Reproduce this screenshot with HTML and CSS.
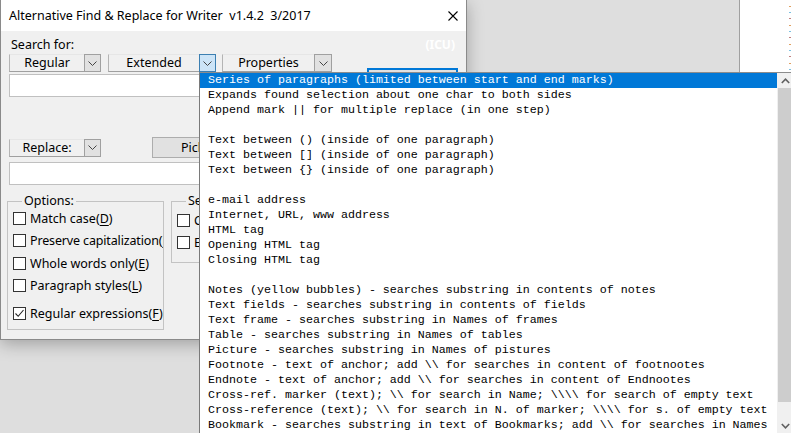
FILE: index.html
```html
<!DOCTYPE html>
<html>
<head>
<meta charset="utf-8">
<link rel="stylesheet" href="styles.css">
</head>
<body>
<div class="side-window"><div class="specks"></div></div>

<div class="dialog">
  <div class="titlebar">
    <span class="title">Alternative Find &amp; Replace for Writer  v1.4.2  3/2017</span>
    <svg class="close" width="10" height="10" viewBox="0 0 10 10"><path d="M0.5 0.5 L9.5 9.5 M9.5 0.5 L0.5 9.5" stroke="#000" stroke-width="1.1" fill="none"/></svg>
  </div>
  <div class="dlg-body">
    <div class="search-head">
      <span class="lbl">Search for:</span>
      <span class="icu">(ICU)</span>
    </div>
    <div class="combo-row">
      <div class="combo w-reg"><span class="ctext">Regular</span><span class="carrow"><svg width="9" height="5" viewBox="0 0 9 5"><path d="M0.5 0.5 L4.5 4.5 L8.5 0.5" stroke="#444" fill="none"/></svg></span></div>
      <div class="combo w-ext"><span class="ctext">Extended</span><span class="carrow open"><svg width="9" height="5" viewBox="0 0 9 5"><path d="M0.5 0.5 L4.5 4.5 L8.5 0.5" stroke="#444" fill="none"/></svg></span></div>
      <div class="combo w-prop"><span class="ctext">Properties</span><span class="carrow"><svg width="9" height="5" viewBox="0 0 9 5"><path d="M0.5 0.5 L4.5 4.5 L8.5 0.5" stroke="#444" fill="none"/></svg></span></div>
    </div>
    <div class="edit-row">
      <div class="edit"></div>
      <div class="btn focus"></div>
    </div>
    <div class="replace-row">
      <div class="combo w-reg"><span class="ctext">Replace:</span><span class="carrow"><svg width="9" height="5" viewBox="0 0 9 5"><path d="M0.5 0.5 L4.5 4.5 L8.5 0.5" stroke="#444" fill="none"/></svg></span></div>
      <div class="btn pick"><span class="pick-label">Pick</span></div>
    </div>
    <div class="edit wide"></div>
    <div class="groups">
      <fieldset class="group g-opts">
        <legend>Options:</legend>
        <div class="cb-list">
          <div class="cb-row"><span class="cb"></span><span>Match case(<u>D</u>)</span></div>
          <div class="cb-row"><span class="cb"></span><span class="tight">Preserve capitalization(<u>P</u>)</span></div>
          <div class="cb-row"><span class="cb"></span><span>Whole words only(<u>E</u>)</span></div>
          <div class="cb-row"><span class="cb"></span><span>Paragraph styles(<u>L</u>)</span></div>
          <div class="cb-row last"><span class="cb checked"><svg width="11" height="11" viewBox="0 0 11 11"><path d="M1.5 5.5 L4.2 8.3 L9.5 2" stroke="#222" stroke-width="1.1" fill="none"/></svg></span><span>Regular expressions(<u>F</u>)</span></div>
        </div>
      </fieldset>
      <fieldset class="group g-sea">
        <legend><span class="clip">Search in:</span></legend>
        <div class="cb-list">
          <div class="cb-row"><span class="cb"></span><span>Current</span></div>
          <div class="cb-row"><span class="cb"></span><span>Entire</span></div>
        </div>
      </fieldset>
    </div>
  </div>
</div>

<div class="popup">
  <div class="list">
    <div class="item sel">Series of paragraphs (limited between start and end marks)</div>
    <div class="item">Expands found selection about one char to both sides</div>
    <div class="item">Append mark || for multiple replace (in one step)</div>
    <div class="item"> </div>
    <div class="item">Text between () (inside of one paragraph)</div>
    <div class="item">Text between [] (inside of one paragraph)</div>
    <div class="item">Text between {} (inside of one paragraph)</div>
    <div class="item"> </div>
    <div class="item">e-mail address</div>
    <div class="item">Internet, URL, www address</div>
    <div class="item">HTML tag</div>
    <div class="item">Opening HTML tag</div>
    <div class="item">Closing HTML tag</div>
    <div class="item"> </div>
    <div class="item">Notes (yellow bubbles) - searches substring in contents of notes</div>
    <div class="item">Text fields - searches substring in contents of fields</div>
    <div class="item">Text frame - searches substring in Names of frames</div>
    <div class="item">Table - searches substring in Names of tables</div>
    <div class="item">Picture - searches substring in Names of pistures</div>
    <div class="item">Footnote - text of anchor; add \\ for searches in content of footnootes</div>
    <div class="item">Endnote - text of anchor; add \\ for searches in content of Endnootes</div>
    <div class="item">Cross-ref. marker (text); \\ for search in Name; \\\\ for search of empty text</div>
    <div class="item">Cross-reference (text); \\ for search in N. of marker; \\\\ for s. of empty text</div>
    <div class="item">Bookmark - searches substring in text of Bookmarks; add \\ for searches in Names</div>
  </div>
  <div class="scrollbar">
    <div class="sb-btn"><svg width="9" height="6" viewBox="0 0 9 6"><path d="M0.8 5 L4.5 1.2 L8.2 5" stroke="#606060" stroke-width="1.6" fill="none"/></svg></div>
    <div class="sb-thumb"></div>
    <div class="sb-track"></div>
    <div class="sb-btn"><svg width="9" height="6" viewBox="0 0 9 6"><path d="M0.8 1 L4.5 4.8 L8.2 1" stroke="#606060" stroke-width="1.6" fill="none"/></svg></div>
  </div>
</div>
</body>
</html>
```

FILE: styles.css
```css
* { box-sizing: border-box; }
html, body { margin: 0; padding: 0; }
body {
  width: 791px;
  height: 433px;
  overflow: hidden;
  position: relative;
  background: #dedede;
  font-family: "Noto Sans", "Open Sans", sans-serif;
  font-size: 12.5px;
  color: #000;
}

/* window peeking at the right */
.side-window {
  position: absolute;
  left: 739px;
  top: 0;
  width: 52px;
  height: 100px;
  background: #fff;
  border-left: 1px solid #a0a0a0;
}
.specks {
  position: absolute;
  right: 0;
  top: 0;
  width: 2px;
  height: 100%;
  background: repeating-linear-gradient(180deg, #fff 0 6px, #e0a060 6px 7px, #fff 7px 12px, #7cc0e0 12px 13px, #fff 13px 18px, #c08080 18px 19px);
}

/* dialog */
.dialog {
  position: absolute;
  left: 0;
  top: 0;
  width: 467px;
  height: 340px;
  background: #f0f0f0;
  border: 1px solid #8a8a8a;
  border-top: none;
  box-shadow: 0 4px 16px rgba(0, 0, 0, 0.28);
  display: flex;
  flex-direction: column;
}
.titlebar {
  flex: none;
  height: 31px;
  background: #fff;
  display: flex;
  align-items: center;
  justify-content: space-between;
  padding: 0 8px 0 8px;
}
.title {
  white-space: pre;
}
.close { display: block; margin-top: 1px; }

.dlg-body {
  padding: 0 8px;
  display: flex;
  flex-direction: column;
}
.search-head {
  height: 23px;
  padding-top: 6px;
  line-height: 16px;
  display: flex;
}
.lbl { padding-left: 2px; }
.icu {
  margin-left: auto;
  margin-right: 3px;
  color: #fff;
  font-weight: bold;
  font-size: 12px;
}

.combo-row {
  height: 18px;
  display: flex;
  gap: 7px;
}
.combo {
  display: flex;
  height: 18px;
}
.ctext {
  display: flex;
  align-items: center;
  justify-content: center;
  background: #f0f0f0;
  border: 1px solid #e6e6e6;
  border-left-color: #b4b4b4;
  border-bottom-color: #a0a0a0;
  border-right: none;
  line-height: 16px;
}
.carrow {
  width: 17px;
  display: flex;
  align-items: center;
  justify-content: center;
  background: #e1e1e1;
  border: 1px solid #a0a0a0;
}
.carrow.open {
  background: #cce4f7;
  border-color: #3c7fb1;
}
.w-reg .ctext { width: 75px; }
.w-ext .ctext { width: 91px; }
.w-prop .ctext { width: 92px; }
.w-prop .carrow { width: 18px; }
.w-ext { margin-right: -1px; }

.edit-row {
  display: flex;
  align-items: flex-start;
  margin-top: -4px;
}
.edit {
  height: 23px;
  background: #fff;
  border: 1px solid #c0c0c0;
}
.edit-row .edit {
  flex: 1;
  margin-top: 6px;
}
.edit.wide { margin-top: 4px; }

.btn {
  display: flex;
  align-items: center;
  background: #e1e1e1;
  border: 1px solid #adadad;
}
.btn.focus {
  width: 91px;
  height: 25px;
  margin-left: 8px;
  border: 2px solid #0078d7;
}
.replace-row {
  margin-top: 40px;
  height: 21px;
  display: flex;
  align-items: center;
}
.btn.pick {
  width: 84px;
  height: 21px;
  margin-left: 51px;
  padding-left: 28px;
  overflow: hidden;
}
.pick-label { white-space: nowrap; }

.groups {
  margin-top: 8px;
  display: flex;
  gap: 7px;
}
.group {
  margin: 0;
  padding: 0 0 0 5px;
  border: 1px solid #c3c3c3;
  min-width: 0;
}
.group legend {
  padding: 0 2px;
  margin-left: 9px;
  line-height: 16px;
}
.g-opts {
  margin-left: -2px;
  width: 157px;
  height: 137px;
}
.g-sea {
  width: 230px;
  height: 70px;
}
.clip {
  display: block;
  width: 16px;
  overflow: hidden;
  white-space: nowrap;
}
.cb-list {
  margin-top: -2px;
  display: flex;
  flex-direction: column;
}
.cb-row {
  width: 150px;
  height: 22.5px;
  display: flex;
  align-items: center;
  gap: 4px;
  white-space: nowrap;
  overflow: hidden;
}
.tight { letter-spacing: -0.15px; }
.g-sea .cb-list { margin-top: 0; }
.g-sea .cb-row { height: 22px; width: 22px; }
.cb-row.last { margin-top: 5px; }
.cb {
  flex: none;
  width: 13px;
  height: 13px;
  background: #fff;
  border: 1px solid #333;
  display: flex;
  align-items: center;
  justify-content: center;
}
u { text-decoration-thickness: 1px; text-underline-offset: 2px; }

/* dropdown popup */
.popup {
  position: absolute;
  left: 199px;
  top: 72px;
  width: 595px;
  height: 361px;
  background: #fff;
  border-left: 1px solid #7a7a7a;
  border-top: 1px solid #8c8c8c;
  display: flex;
}
.list {
  width: 577px;
  flex: none;
  font-family: "Liberation Mono", "Courier New", monospace;
  font-size: 11.67px;
}
.item {
  height: 15px;
  line-height: 15px;
  padding-left: 8px;
  white-space: pre;
}
.item.sel {
  background: #0078d7;
  color: #fff;
}
.scrollbar {
  width: 17px;
  flex: none;
  background: #f0f0f0;
  display: flex;
  flex-direction: column;
}
.sb-btn {
  height: 15px;
  display: flex;
  align-items: center;
  justify-content: center;
}
.sb-thumb {
  height: 314px;
  background: #cdcdcd;
  margin: 0 1px;
}
.sb-track { flex: 1; }
```
